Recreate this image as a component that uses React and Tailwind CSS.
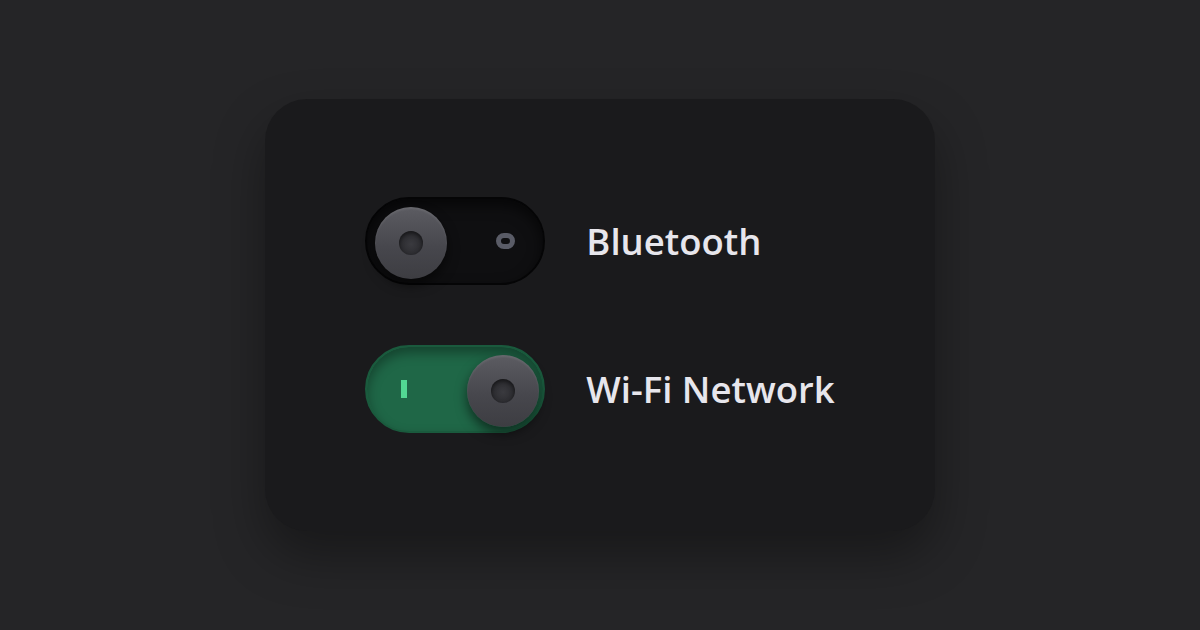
import React, { useState } from 'react'

function Toggle({ on, onChange }){
  return (
    <button
      onClick={onChange}
      className={`relative flex h-[88px] w-[180px] shrink-0 items-center rounded-full border-2 ${on
        ? 'justify-end border-[#1a5a3d] bg-[#1f6747] pr-[4px] shadow-[inset_0_6px_12px_rgba(0,0,0,0.35)]'
        : 'justify-start border-[#050506] bg-[#0f0f11] pl-[8px] shadow-[inset_0_6px_14px_rgba(0,0,0,0.6)]'}`}
    >
      {on ? (
        <span className="absolute left-[34px] top-1/2 h-[18px] w-[6px] -translate-y-1/2 bg-[#52d893]" />
      ) : (
        <span className="absolute right-[28px] top-1/2 h-[16px] w-[19px] -translate-y-1/2 rounded-full border-[5px] border-[#5a5c67]" />
      )}
      <span className="relative flex h-[72px] w-[72px] translate-y-[2px] items-center justify-center rounded-full bg-[linear-gradient(180deg,#5c5c62_0%,#47474d_55%,#3d3d42_100%)] shadow-[0_6px_12px_rgba(0,0,0,0.55),inset_0_2px_2px_rgba(255,255,255,0.08)]">
        <span className="h-[24px] w-[24px] rounded-full bg-[radial-gradient(circle_at_50%_55%,#3a3a3f_0%,#2a2a2e_70%,#222225_100%)] shadow-[inset_0_2px_4px_rgba(0,0,0,0.5)]" />
      </span>
    </button>
  )
}

export default function App(){
  const [bluetooth, setBluetooth] = useState(false)
  const [wifi, setWifi] = useState(true)

  const rows = [
    { label: 'Bluetooth', on: bluetooth, toggle: () => setBluetooth(v => !v) },
    { label: 'Wi-Fi Network', on: wifi, toggle: () => setWifi(v => !v) },
  ]

  return (
    <div className="flex h-[630px] w-full items-center justify-center bg-[#252527]" style={{ fontFamily: '"Open Sans", "Noto Sans", sans-serif' }}>
      <div className="flex flex-col gap-[60px] rounded-[42px] bg-[#1a1a1c] px-[100px] py-[98px] shadow-[0_24px_50px_rgba(0,0,0,0.35),-4px_-4px_20px_rgba(255,255,255,0.01)]">
        {rows.map(row => (
          <div key={row.label} className="flex items-center gap-[41px]">
            <Toggle on={row.on} onChange={row.toggle} />
            <span className="text-[36.5px] font-semibold leading-none text-[#e7e6ec]">{row.label}</span>
          </div>
        ))}
      </div>
    </div>
  )
}
